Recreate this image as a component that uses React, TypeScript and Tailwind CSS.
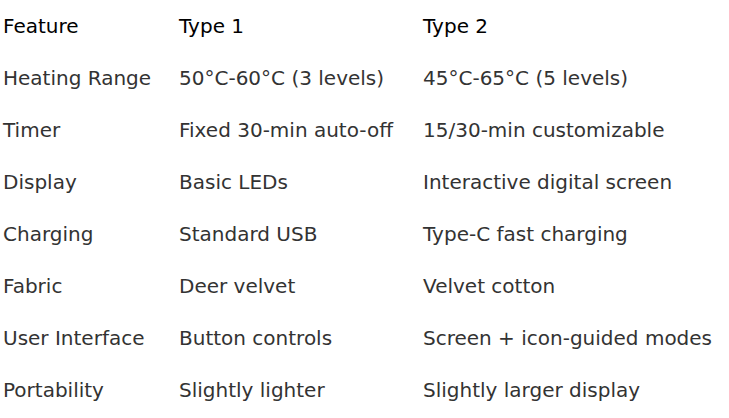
import React from "react";

const rows: [string, string, string][] = [
  ["Heating Range", "50°C-60°C (3 levels)", "45°C-65°C (5 levels)"],
  ["Timer", "Fixed 30-min auto-off", "15/30-min customizable"],
  ["Display", "Basic LEDs", "Interactive digital screen"],
  ["Charging", "Standard USB", "Type-C fast charging"],
  ["Fabric", "Deer velvet", "Velvet cotton"],
  ["User Interface", "Button controls", "Screen + icon-guided modes"],
  ["Portability", "Slightly lighter", "Slightly larger display"],
];

export default function App() {
  return (
    <div
      className="w-[729px] h-[418px] bg-white overflow-hidden pl-[3px] text-[20px]"
      style={{ fontFamily: '"DejaVu Sans", sans-serif' }}
    >
      <div className="grid grid-cols-[176px_244px_1fr] auto-rows-[52px] items-center whitespace-nowrap">
        <div className="text-black">Feature</div>
        <div className="text-black">Type 1</div>
        <div className="text-black">Type 2</div>
        {rows.map((r) => (
          <React.Fragment key={r[0]}>
            <div className="text-[#333]">{r[0]}</div>
            <div className="text-[#333]">{r[1]}</div>
            <div className="text-[#333]">{r[2]}</div>
          </React.Fragment>
        ))}
      </div>
    </div>
  );
}
